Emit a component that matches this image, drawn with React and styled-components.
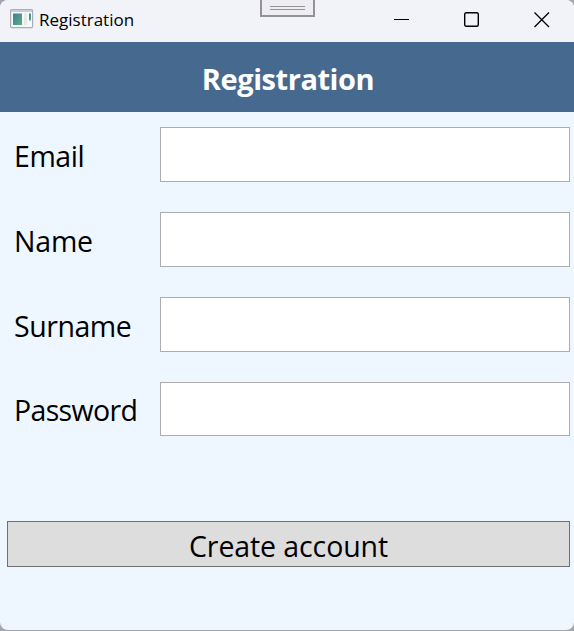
import React from 'react';
import styled, { createGlobalStyle } from 'styled-components';

const Global = createGlobalStyle`
  * { box-sizing: border-box; }
  body { margin: 0; background: #a3a6aa; overflow: hidden; }
`;

const Window = styled.main`
  position: relative;
  width: 574px;
  height: 630px;
  overflow: hidden;
  border-radius: 8px;
  background: #eef7ff;
  color: #000;
  font-family: 'Segoe UI', 'Open Sans', 'Noto Sans', sans-serif;
`;

const TitleBar = styled.header`
  display: flex;
  align-items: flex-start;
  height: 42px;
  padding-left: 10px;
  background: #f1f3f9;
`;

const AppIcon = styled.svg`
  width: 24px;
  height: 20px;
  margin-top: 9px;
`;

const WindowTitle = styled.span`
  flex: 1;
  margin: 8px 0 0 5px;
  font-size: 17px;
  line-height: 24px;
  letter-spacing: 0;
`;

const Controls = styled.div`
  display: flex;
  margin-right: -3px;
`;

const Control = styled.button`
  display: grid;
  place-items: center;
  width: 70px;
  height: 39px;
  padding: 0;
  border: 0;
  background: transparent;
`;

const DebugHandle = styled.div`
  position: absolute;
  top: 0;
  left: 260px;
  width: 55px;
  height: 17px;
  padding: 6px 8px 0;
  border: 2px solid #929397;
  border-top: 0;
  background: #eeeef2;
`;

const Grip = styled.div`
  height: 4px;
  border: solid #929397;
  border-width: 1px 0;
`;

const Banner = styled.h1`
  height: 70px;
  margin: 0;
  padding: 17px 0 0 2px;
  background: #46698f;
  color: #fff;
  text-align: center;
  font-size: 29px;
  font-weight: 700;
  line-height: 40px;
  letter-spacing: -0.45px;
`;

const Form = styled.form`
  display: flex;
  flex-direction: column;
  padding: 15px 4px 0 7px;
`;

const Field = styled.label`
  display: grid;
  grid-template-columns: 153px 410px;
  height: ${p => p.$height}px;
  margin-bottom: 30px;
`;

const Label = styled.span`
  padding: ${p => p.$top}px 0 0 7px;
  font-size: 28.5px;
  line-height: 40px;
  letter-spacing: ${p => p.$spacing}px;
`;

const Input = styled.input`
  width: 100%;
  height: 100%;
  padding: 0 8px;
  border: 1px solid #abadb3;
  border-radius: 0;
  outline: 0;
  background: #fff;
  font: inherit;
  font-size: 28px;
`;

const Submit = styled.button`
  height: 46px;
  margin-top: 55px;
  padding: 4px 0 0;
  border: 1px solid #707070;
  background: #ddd;
  color: #000;
  font-family: inherit;
  font-size: 28.5px;
  line-height: 40px;
  letter-spacing: -0.1px;
`;

const fields = [
  { name: 'Email', type: 'email', height: 55, top: 9, spacing: -0.45 },
  { name: 'Name', type: 'text', height: 55, top: 9, spacing: -0.2 },
  { name: 'Surname', type: 'text', height: 55, top: 9, spacing: -0.45 },
  { name: 'Password', type: 'password', height: 54, top: 8, spacing: -0.65 },
];

export default function App() {
  return (
    <>
      <Global />
      <Window>
        <TitleBar>
          <AppIcon viewBox="0 0 24 20">
            <defs>
              <linearGradient id="pane" x1="0" y1="0" x2="1" y2="1">
                <stop stopColor="#427aa0" />
                <stop offset="1" stopColor="#59b07b" />
              </linearGradient>
            </defs>
            <rect x="0.6" y="0.6" width="22" height="18" rx="1" fill="#f8f9fb" stroke="#a9adb5" strokeWidth="1.2" />
            <path d="M1 2H22" stroke="#c9cdd4" strokeWidth="2" />
            <rect x="3" y="4.5" width="9" height="11.5" fill="url(#pane)" />
            <rect x="14" y="4.5" width="3" height="11.5" fill="#e9e9e9" />
            <rect x="19" y="4.5" width="2" height="7" fill="url(#pane)" />
          </AppIcon>
          <WindowTitle>Registration</WindowTitle>
          <Controls>
            <Control type="button" aria-label="Minimize">
              <svg width="16" height="16"><path d="M0 7.5H15" stroke="#000" /></svg>
            </Control>
            <Control type="button" aria-label="Maximize">
              <svg width="16" height="16"><rect x=".7" y=".7" width="13.6" height="13.6" rx="1.5" fill="none" stroke="#000" strokeWidth="1.4" /></svg>
            </Control>
            <Control type="button" aria-label="Close">
              <svg width="16" height="16"><path d="M.5 .5L15 15M15 .5L.5 15" stroke="#000" strokeWidth="1.3" /></svg>
            </Control>
          </Controls>
        </TitleBar>
        <DebugHandle><Grip /></DebugHandle>
        <Banner>Registration</Banner>
        <Form onSubmit={e => e.preventDefault()}>
          {fields.map(f => (
            <Field key={f.name} $height={f.height}>
              <Label $top={f.top} $spacing={f.spacing}>{f.name}</Label>
              <Input type={f.type} />
            </Field>
          ))}
          <Submit type="submit">Create account</Submit>
        </Form>
      </Window>
    </>
  );
}
